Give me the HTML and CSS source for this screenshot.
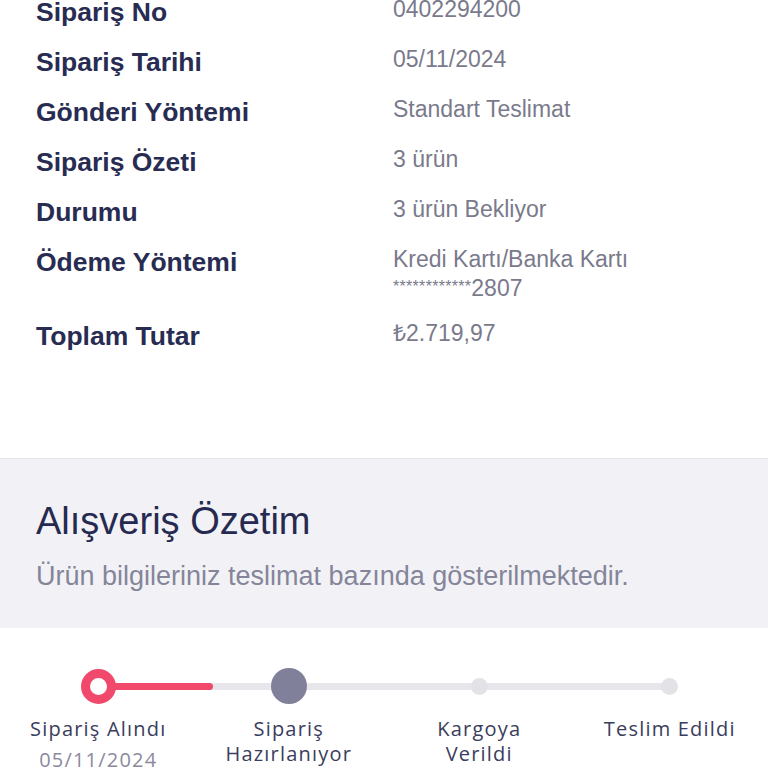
FILE: index.html
```html
<!DOCTYPE html>
<html lang="tr">
<head>
<meta charset="utf-8">
<title>Sipariş Detayı</title>
<link rel="stylesheet" href="styles.css">
</head>
<body>
<div class="page">
  <section class="details">
    <div class="row"><div class="label">Sipariş No</div><div class="value">0402294200</div></div>
    <div class="row"><div class="label">Sipariş Tarihi</div><div class="value">05/11/2024</div></div>
    <div class="row"><div class="label">Gönderi Yöntemi</div><div class="value">Standart Teslimat</div></div>
    <div class="row"><div class="label">Sipariş Özeti</div><div class="value">3 ürün</div></div>
    <div class="row"><div class="label">Durumu</div><div class="value">3 ürün Bekliyor</div></div>
    <div class="row"><div class="label">Ödeme Yöntemi</div><div class="value">Kredi Kartı/Banka Kartı<br><span class="stars">************</span>2807</div></div>
    <div class="row"><div class="label">Toplam Tutar</div><div class="value">₺2.719,97</div></div>
  </section>

  <section class="summary">
    <h2 class="summary-title">Alışveriş Özetim</h2>
    <p class="summary-sub">Ürün bilgileriniz teslimat bazında gösterilmektedir.</p>
  </section>

  <section class="stepper">
    <div class="track">
      <div class="track-line"><div class="track-fill" style="width:20%"></div></div>
      <div class="node"><span class="dot dot-active"></span></div>
      <div class="node"><span class="dot dot-current"></span></div>
      <div class="node"><span class="dot dot-todo"></span></div>
      <div class="node"><span class="dot dot-todo"></span></div>
    </div>
    <div class="steps">
      <div class="step">Sipariş Alındı<div class="step-date">05/11/2024</div></div>
      <div class="step">Sipariş<br>Hazırlanıyor</div>
      <div class="step">Kargoya<br>Verildi</div>
      <div class="step">Teslim Edildi</div>
    </div>
  </section>
</div>
</body>
</html>
```

FILE: styles.css
```css
html, body {
  margin: 0;
  padding: 0;
  background: #ffffff;
}

.page {
  width: 768px;
  height: 768px;
  overflow: hidden;
}

.details {
  margin-top: -4px;
  padding: 0 0 106px 36px;
  border-bottom: 1px solid #e3e3e8;
  display: flex;
  flex-direction: column;
  gap: 18px;
  font-family: "Liberation Sans", Arial, sans-serif;
}

.row {
  display: flex;
  align-items: flex-start;
}

.label {
  width: 357px;
  flex: none;
  font-size: 26.5px;
  line-height: 32px;
  font-weight: bold;
  color: #282c52;
}

.value {
  font-size: 23px;
  line-height: 27px;
  color: #7a7a8c;
}

.stars {
  font-size: 16px;
  vertical-align: 4px;
  letter-spacing: 0.3px;
}

.summary {
  background: #f2f2f6;
  padding: 39px 36px 36px;
  font-family: "Liberation Sans", Arial, sans-serif;
}

.summary-title {
  margin: 0;
  font-size: 38px;
  line-height: 46px;
  font-weight: normal;
  color: #262a50;
}

.summary-sub {
  margin: 16px 0 0;
  font-size: 27px;
  line-height: 32px;
  color: #85859a;
}

.stepper {
  padding: 40px 3px 0;
  font-family: "Open Sans", sans-serif;
}

.track {
  position: relative;
  display: grid;
  grid-template-columns: repeat(4, 1fr);
  height: 36px;
  align-items: center;
}

.track-line {
  position: absolute;
  left: 12.5%;
  right: 12.5%;
  top: 15px;
  height: 7px;
  border-radius: 4px;
  background: #e7e7eb;
}

.track-fill {
  height: 100%;
  border-radius: 4px;
  background: #f0496b;
}

.node {
  position: relative;
  display: flex;
  justify-content: center;
  align-items: center;
}

.dot {
  display: block;
  border-radius: 50%;
  box-sizing: border-box;
}

.dot-active {
  width: 35px;
  height: 35px;
  border: 9px solid #f0496b;
  background: #ffffff;
}

.dot-current {
  width: 36px;
  height: 36px;
  background: #80809a;
}

.dot-todo {
  width: 17px;
  height: 17px;
  background: #e3e3e7;
}

.steps {
  margin-top: 12px;
  display: grid;
  grid-template-columns: repeat(4, 1fr);
}

.step {
  text-align: center;
  font-size: 20px;
  line-height: 25px;
  letter-spacing: 1.2px;
  color: #3a3d5c;
}

.step-date {
  color: #8a8a9e;
  margin-top: 6px;
}
```
